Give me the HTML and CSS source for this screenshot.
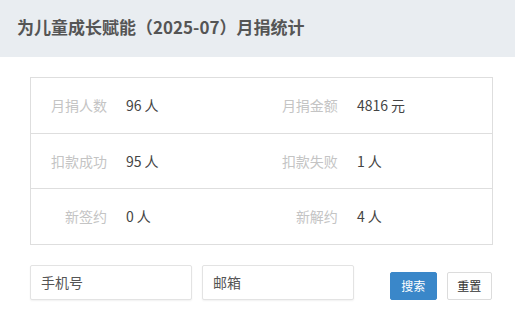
FILE: index.html
```
<html>
<head>
<meta charset="utf-8"/>
<title>月捐统计</title>
<link rel="stylesheet" href="styles.css">
</head>
<body>
<div class="hd">为儿童成长赋能（2025-07）月捐统计</div>

<div class="main">
<table class="stat">
<tr><td class="lb">月捐人数</td>
	<td class="val">96 人</td>
	<td class="lb">月捐金额</td>
	<td class="val">4816 元</td></tr>
<tr><td class="lb">扣款成功</td>
	<td class="val">95 人</td>
	<td class="lb">扣款失败</td>
	<td class="val">1 人</td></tr>
<tr><td class="lb">新签约</td>
	<td class="val">0 人</td>
	<td class="lb">新解约</td>
	<td class="val">4 人</td></tr>
</table>

<div class="search">
	<input type="text" class="ipt ipt1" placeholder="手机号">
	<input type="text" class="ipt ipt2" placeholder="邮箱">
	<button class="btn btn-blue">搜索</button>
	<button class="btn">重置</button>
</div>
</div>
</body>
</html>
```

FILE: styles.css
```
html, body { margin: 0; font-family: "Noto Sans CJK SC", "Liberation Sans", sans-serif; background: #fff; }
.hd { height: 57px; line-height: 54px; padding-left: 17px; background-color: #e9edf1;
	font-size: 17px; font-weight: bold; color: #555; }
.main { padding: 20px 23px 0 30px; }
table.stat { width: 463px; border-collapse: collapse; border: 1px solid #dedede; }
table.stat td { height: 55.6px; font-size: 14px; padding: 0; border-bottom: 1px solid #dedede; }
td.lb { width: 20%; text-align: right; padding-right: 16px !important; color: #c4c4c4; }
td.val { width: 30%; padding-left: 3px !important; color: #444; }
.search { display: flex; align-items: flex-end; margin-top: 20px; }
.ipt { box-sizing: border-box; height: 35px; border: 1px solid #e3e3e3; border-radius: 2px;
	box-shadow: 0 1px 2px rgba(0,0,0,0.06); padding: 0 10px; font-size: 14px; font-family: inherit; outline: none; }
.ipt::placeholder { color: #555; }
.ipt1 { width: 162px; }
.ipt2 { width: 152px; margin-left: 10px; }
.btn { box-sizing: border-box; height: 28px; width: 46px; padding: 0; font-size: 12px; font-family: inherit;
	white-space: nowrap; border: 1px solid #dcdcdc; border-radius: 2px; background: #fff; color: #333; margin-left: 10px; }
.btn-blue { width: 47px; background-color: #3a87c9; border-color: #3a87c9; color: #fff; margin-left: 36px; }
```
